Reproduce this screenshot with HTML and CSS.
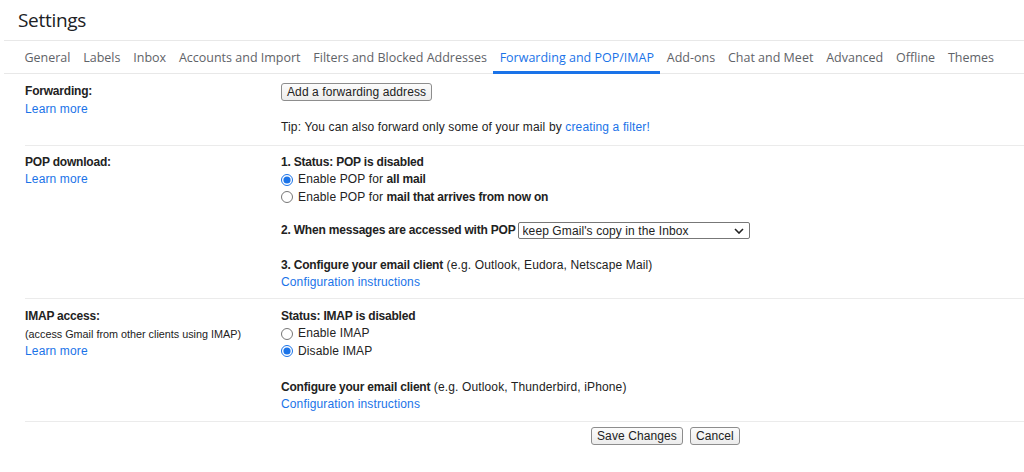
FILE: index.html
```html
<!DOCTYPE html>
<html lang="en">
<head>
    <meta charset="UTF-8">
    <title>Settings</title>
    <link rel="stylesheet" href="styles.css">
</head>
<body>
    <h1 class="title">Settings</h1>

    <nav class="tabs">
        <a class="tab">General</a>
        <a class="tab">Labels</a>
        <a class="tab">Inbox</a>
        <a class="tab">Accounts and Import</a>
        <a class="tab">Filters and Blocked Addresses</a>
        <a class="tab active">Forwarding and POP/IMAP</a>
        <a class="tab">Add-ons</a>
        <a class="tab">Chat and Meet</a>
        <a class="tab">Advanced</a>
        <a class="tab">Offline</a>
        <a class="tab">Themes</a>
    </nav>

    <div class="content">
        <!-- forwarding -->
        <div class="row first">
            <div class="label">
                <b>Forwarding:</b>
                <a class="link">Learn more</a>
            </div>
            <div class="value">
                <button class="btn">Add a forwarding address</button>
                <p class="tip">Tip: You can also forward only some of your mail by <a class="link">creating a filter!</a></p>
            </div>
        </div>

        <!-- pop -->
        <div class="row pop">
            <div class="label">
                <b>POP download:</b>
                <a class="link">Learn more</a>
            </div>
            <div class="value">
                <b>1. Status: POP is disabled</b>
                <label class="opt"><input type="radio" name="pop" checked><span>Enable POP for <b>all mail</b></span></label>
                <label class="opt"><input type="radio" name="pop"><span>Enable POP for <b>mail that arrives from now on</b></span></label>
                <div class="when">
                    <b>2. When messages are accessed with POP</b>
                    <select class="select">
                        <option>keep Gmail's copy in the Inbox</option>
                    </select>
                </div>
                <div class="step">
                    <b>3. Configure your email client</b> (e.g. Outlook, Eudora, Netscape Mail)
                </div>
                <a class="link">Configuration instructions</a>
            </div>
        </div>

        <!-- imap -->
        <div class="row imap">
            <div class="label">
                <b>IMAP access:</b>
                <span class="small">(access Gmail from other clients using IMAP)</span>
                <a class="link">Learn more</a>
            </div>
            <div class="value">
                <b>Status: IMAP is disabled</b>
                <label class="opt"><input type="radio" name="imap"><span>Enable IMAP</span></label>
                <label class="opt"><input type="radio" name="imap" checked><span>Disable IMAP</span></label>
                <div class="step imap-step">
                    <b>Configure your email client</b> (e.g. Outlook, Thunderbird, iPhone)
                </div>
                <a class="link">Configuration instructions</a>
            </div>
        </div>

        <div class="actions">
            <button class="btn">Save Changes</button>
            <button class="btn">Cancel</button>
        </div>
    </div>
</body>
</html>
```

FILE: styles.css
```css
body {
    margin: 0;
    font-family: "Liberation Sans", Arial, sans-serif;
    font-size: 12px;
    letter-spacing: 0.14px;
    color: #222;
    background: #fff;
}

b {
    letter-spacing: -0.2px;
}

.title {
    margin: 0 0 0 4px;
    padding: 7px 0 0 14px;
    height: 41px;
    box-sizing: border-box;
    font-family: "Open Sans", sans-serif;
    font-size: 19px;
    font-weight: 400;
    letter-spacing: -0.3px;
    color: #202124;
    border-bottom: 1px solid #e8e8e8;
}

.tabs {
    display: flex;
    margin-left: 4px;
    padding-left: 14px;
    border-bottom: 1px solid #e8e8e8;
    height: 32px;
}

.tab {
    padding: 0 6.4px;
    line-height: 33px;
    font-family: "Open Sans", sans-serif;
    font-size: 12.5px;
    letter-spacing: 0;
    color: #5f6368;
    height: 33px;
    box-sizing: border-box;
}

.tab.active {
    color: #1a73e8;
    border-bottom: 3px solid #1a73e8;
}

.content {
    margin-left: 25px;
}

.row {
    display: flex;
    border-top: 1px solid #ebebeb;
    line-height: 17.5px;
}

.row.first {
    border-top: none;
    padding: 9px 0 8px;
}

.row.pop {
    padding: 8px 0 6px;
}

.row.imap {
    padding: 9px 0 7px;
}

.label {
    width: 256px;
    display: flex;
    flex-direction: column;
    align-items: flex-start;
}

.value {
    display: flex;
    flex-direction: column;
    align-items: flex-start;
}

.link {
    color: #1a73e8;
    cursor: pointer;
}

.small {
    font-size: 10.8px;
    letter-spacing: 0;
    line-height: 18px;
}

.btn {
    font-family: "Liberation Sans", Arial, sans-serif;
    font-size: 12px;
    letter-spacing: 0.1px;
    color: #222;
    height: 18px;
    padding: 0 5px;
    background: linear-gradient(#fcfcfc, #ececec);
    border: 1px solid #8d8d8d;
    border-radius: 3px;
}

.tip {
    margin: 18px 0 0;
}

.opt {
    display: flex;
    align-items: center;
    height: 17.5px;
}

.opt input {
    margin: 0 5px 0 0;
    width: 12px;
    height: 12px;
    accent-color: #1a73e8;
}

.when {
    display: flex;
    align-items: center;
    margin-top: 16px;
    gap: 2px;
}

.select {
    appearance: none;
    width: 232px;
    height: 17px;
    padding: 0 4px;
    font-family: "Liberation Sans", Arial, sans-serif;
    font-size: 12px;
    letter-spacing: 0.1px;
    color: #222;
    border: 1px solid #777;
    border-radius: 2px;
    background: #fff url("data:image/svg+xml,%3Csvg xmlns='http://www.w3.org/2000/svg' width='10' height='6'%3E%3Cpath d='M1 1l4 4 4-4' fill='none' stroke='%23222' stroke-width='1.6'/%3E%3C/svg%3E") no-repeat right 5px center;
}

.step {
    margin-top: 17px;
}

.imap-step {
    margin-top: 18.5px;
}

.actions {
    border-top: 1px solid #ebebeb;
    padding: 5px 0 0 566px;
    display: flex;
    gap: 7px;
}
```
